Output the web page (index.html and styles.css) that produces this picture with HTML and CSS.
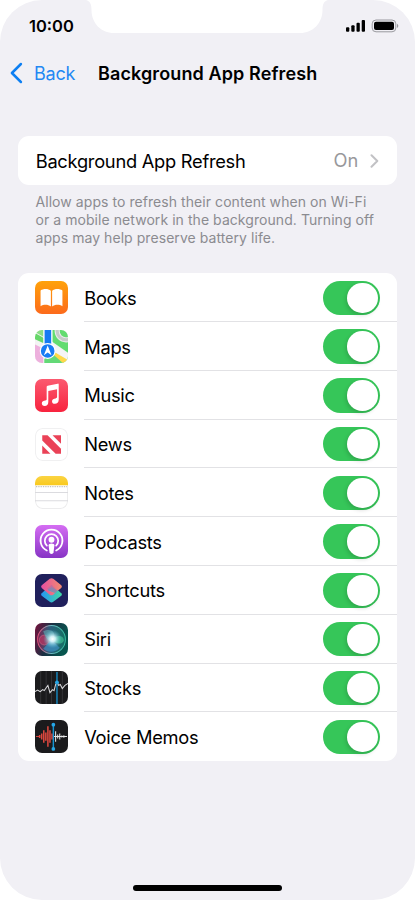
FILE: index.html
```
<!DOCTYPE html>
<html lang="en">
<head>
<meta charset="utf-8">
<title>Background App Refresh</title>
<link rel="stylesheet" href="styles.css">
</head>
<body>
<main class="screen">
  <svg class="notch" viewBox="0 0 244 34"><path d="M0 0C4 1 5.500 4 5.500 10C5.500 23 15 33 28 33H214C227 33 236.500 23 236.500 10C236.500 4 238 1 242 0Z" fill="#fff"/></svg>
  <header class="status">
    <span class="time">10:00</span>
    <svg class="indicators" width="54" height="14" viewBox="0 0 54 14">
      <rect x="0" y="8.300" width="3.300" height="4.400" rx="1"/><rect x="5.300" y="6.300" width="3.300" height="6.400" rx="1"/><rect x="10.500" y="3.700" width="3.300" height="9" rx="1"/><rect x="15.700" y="1" width="3.300" height="11.700" rx="1"/>
      <rect x="26.200" y="1" width="23.600" height="11.800" rx="3.800" fill="none" stroke="#99999e"/><rect x="28" y="2.800" width="20" height="8.200" rx="2"/><path d="M51 4.800Q53.600 6.900 51 9Z" fill="#99999e"/>
    </svg>
  </header>
  <nav class="nav">
    <svg class="back-icon" width="14" height="22" viewBox="0 0 14 22"><path d="M11.900 2L2.900 11L11.900 20"/></svg>
    <a class="back">Back</a>
    <h1 class="title">Background App Refresh</h1>
  </nav>
  <section class="card setting">
    <span class="setting-label">Background App Refresh</span>
    <span class="setting-value">On</span>
    <svg class="chevron" width="9" height="14" viewBox="0 0 9 14"><path d="M1.500 1.200L7.300 7L1.500 12.800"/></svg>
  </section>
  <p class="note">Allow apps to refresh their content when on Wi-Fi<br>or a mobile network in the background. Turning off<br>apps may help preserve battery life.</p>
  <ul class="card list">
    <li class="row">
      <svg class="icon" viewBox="0 0 32 32"><defs><linearGradient id="books" x2="0" y2="1"><stop stop-color="#ffa20a"/><stop offset="1" stop-color="#fc6a1c"/></linearGradient></defs><rect width="32" height="32" fill="url(#books)"/><path d="M15.400 9.500C13 7.200 8 7.200 5.400 9.200V24.400C8.500 22.500 12.700 22.600 15.400 24.700ZM16.600 9.500C19 7.200 24 7.200 26.600 9.200V24.400C23.500 22.500 19.300 22.600 16.600 24.700Z" fill="#fff"/></svg>
      <div class="cell"><span>Books</span><i class="toggle"></i></div>
    </li>
    <li class="row">
      <svg class="icon" viewBox="0 0 32 32"><rect width="32" height="32" fill="#f3f3f3"/><path d="M0 3L9 8V13L0 9Z" fill="#66d769"/><path d="M0 0H9V7L0 2Z" fill="#8ade85"/><path d="M16 0H32V22L16 11Z" fill="#62dc70"/><path d="M0 14L8 18V32H0Z" fill="#edb0dd"/><path d="M9 28L19 17L32 26V32H9Z" fill="#63d977"/><path d="M16 13L32 23V32L13 17Z" fill="#f5f5f5"/><path d="M20 22L32 29V32H27L18 24Z" fill="#ffd84a"/><circle cx="30" cy="1" r="8.500" fill="none" stroke="#e9e9eb" stroke-width="5"/><circle cx="30" cy="1" r="8.500" fill="none" stroke="#c5cbc8" stroke-width="3"/><path d="M8 0H17V18H8Z" fill="#fff"/><path d="M9.300 0H15.700V17H9.300Z" fill="#147bf2"/><circle cx="12.300" cy="20.300" r="7.700" fill="#fff"/><circle cx="12.300" cy="20.300" r="6.600" fill="#187cf4"/><path d="M12.300 15L16 24.500L12.300 21.700L8.600 24.500Z" fill="#fff"/></svg>
      <div class="cell"><span>Maps</span><i class="toggle"></i></div>
    </li>
    <li class="row">
      <svg class="icon" viewBox="0 0 32 32"><defs><linearGradient id="music" x2="0" y2="1"><stop stop-color="#fb5a70"/><stop offset="1" stop-color="#f8233e"/></linearGradient></defs><rect width="32" height="32" fill="url(#music)"/><path d="M11.300 7.600Q11.300 6.700 12.200 6.500L22 4.500Q23 4.300 23 5.300V20.200C23 22.700 21.400 24 19.300 24.100C17.500 24.100 16.400 23 16.500 21.500C16.600 19.700 18.200 19.100 20 18.800C21 18.600 21.400 18.300 21.400 17.300V10L12.900 11.700V22.300C12.900 24.800 11.500 26 9.400 26.100C7.600 26.100 6.500 25 6.600 23.500C6.700 21.700 8.300 21.100 10.100 20.800C11.100 20.600 11.300 20.300 11.300 19.300Z" fill="#fff"/></svg>
      <div class="cell"><span>Music</span><i class="toggle"></i></div>
    </li>
    <li class="row">
      <svg class="icon" viewBox="0 0 32 32"><rect x=".5" y=".5" width="31" height="31" rx="7" fill="#fff" stroke="#f0f0f1"/><g fill="#ea4257"><path d="M7 7H12.200L25.200 20V25H20L7 12Z"/><path d="M17 7H25.200V15.200Z"/><path d="M7 17L15 25H7Z"/></g></svg>
      <div class="cell"><span>News</span><i class="toggle"></i></div>
    </li>
    <li class="row">
      <svg class="icon" viewBox="0 0 32 32"><defs><linearGradient id="notes" x2="0" y2="1"><stop stop-color="#fbd443"/><stop offset="1" stop-color="#f9c91d"/></linearGradient></defs><rect x=".5" y=".5" width="31" height="31" rx="7" fill="#fff" stroke="#ececed"/><path d="M0 0H32V9H0Z" fill="url(#notes)"/><path d="M1 10.300H31" stroke="#b9b7ae" stroke-dasharray=".8 .9"/><path d="M0 16H32M0 24H32" stroke="#d8d8dc" stroke-width=".9"/></svg>
      <div class="cell"><span>Notes</span><i class="toggle"></i></div>
    </li>
    <li class="row">
      <svg class="icon" viewBox="0 0 32 32"><defs><linearGradient id="pods" x2="0" y2="1"><stop stop-color="#d56df3"/><stop offset="1" stop-color="#8734c5"/></linearGradient></defs><rect width="32" height="32" fill="url(#pods)"/><g fill="none" stroke="#fff" stroke-width="1.700" stroke-linecap="round"><path d="M11.500 24.700A10.600 10.600 0 1 1 20.500 24.700"/><path d="M11.500 20A6.500 6.500 0 1 1 20.500 20"/></g><circle cx="16" cy="14.300" r="2.800" fill="#fff"/><path d="M13.200 19.700Q13.200 18 16 18T18.800 19.700L18 26.500Q17.700 28 16 28T14 26.500Z" fill="#fff"/></svg>
      <div class="cell"><span>Podcasts</span><i class="toggle"></i></div>
    </li>
    <li class="row">
      <svg class="icon" viewBox="0 0 32 32"><defs><linearGradient id="sa" x1="0" x2="1"><stop stop-color="#e64fa0"/><stop offset="1" stop-color="#f18b70"/></linearGradient><linearGradient id="sb" x1="0" x2="1"><stop stop-color="#2795f3"/><stop offset="1" stop-color="#43d9a4"/></linearGradient></defs><rect width="32" height="32" fill="#20205c"/><path d="M14.300 11.700Q16 10.300 17.700 11.700L25.500 18.700Q26.700 20 25.500 21.200L17.700 27Q16 28.200 14.300 27L6.500 21.200Q5.300 20 6.500 18.700Z" fill="url(#sb)"/><path d="M14.300 4.700Q16 3.400 17.700 4.700L25.500 11Q26.700 12.200 25.500 13.500L22 16.300L16 12.500L12.300 15.500L19.500 18.500L17.700 20Q16 21.200 14.300 20L6.500 13.500Q5.300 12.200 6.500 11Z" fill="url(#sa)"/><path d="M16 10.500L21.700 16.300L19.800 18.500L11.500 14.300Z" fill="#b66ca1" opacity=".7"/></svg>
      <div class="cell"><span>Shortcuts</span><i class="toggle"></i></div>
    </li>
    <li class="row">
      <svg class="icon" viewBox="0 0 32 32"><defs><linearGradient id="siri" x2="1" y2=".3"><stop stop-color="#77133e"/><stop offset=".5" stop-color="#193043"/><stop offset="1" stop-color="#07564f"/></linearGradient><linearGradient id="orb" x2="1"><stop stop-color="#7c2450"/><stop offset=".45" stop-color="#2a5f7c"/><stop offset="1" stop-color="#157263"/></linearGradient><linearGradient id="ring" x2="1"><stop stop-color="#df4b77"/><stop offset=".5" stop-color="#6bbac1"/><stop offset="1" stop-color="#31b59a"/></linearGradient><radialGradient id="glow"><stop stop-color="#fff"/><stop offset=".3" stop-color="#dffaff" stop-opacity=".9"/><stop offset="1" stop-color="#57c6d7" stop-opacity="0"/></radialGradient></defs><rect width="32" height="32" fill="url(#siri)"/><circle cx="16" cy="16" r="13.500" fill="url(#orb)" stroke="url(#ring)"/><circle cx="9" cy="16.500" r="4.800" fill="#c33561" opacity=".65" stroke="#ed6f8f" stroke-width=".8"/><path d="M8 8C16 4 22 10 17 17C12 19 10 13 8 8Z" fill="#5d9fab" opacity=".7"/><path d="M16 16C23 10 28 13 28 17C26 22 20 20 16 16Z" fill="#39b48d" opacity=".8"/><path d="M16 16L24 24C20 29 12 29 8 25Z" fill="#3e8ebe" opacity=".75"/><circle cx="17" cy="15.500" r="9" fill="url(#glow)"/></svg>
      <div class="cell"><span>Siri</span><i class="toggle"></i></div>
    </li>
    <li class="row">
      <svg class="icon" viewBox="0 0 32 32"><rect width="32" height="32" fill="#1b1b1d"/><path d="M5.500 0V32M10.800 0V32M16 0V32M26.500 0V32" stroke="#38383b" stroke-width=".8"/><path d="M21.300 1V32" stroke="#1686bd" stroke-width="1.400"/><path d="M0 20L2.500 18.500L5 20L7.500 18L9 19L11 16L12.500 14L14.500 21L17 18L18.500 19L20 13L21.500 11L23 14L24.500 13L26.500 17L29 14L32 12" fill="none" stroke="#d9d9dc" stroke-width="1"/><circle cx="21.300" cy="11" r="1.800" fill="#26a7e7"/></svg>
      <div class="cell"><span>Stocks</span><i class="toggle"></i></div>
    </li>
    <li class="row">
      <svg class="icon" viewBox="0 0 32 32"><rect width="32" height="32" fill="#1b1b1d"/><path d="M1 16H4" stroke="#d8453d"/><path d="M4.500 14.500V17.500M6.500 13V19M8.500 10V22M10.500 12V20M12.500 6V26M14.500 10V22M16.500 13V19" stroke="#dc473e" stroke-width="1.500"/><path d="M20 11V21M22 14V18M24 13V19M26 15V17M28 14.800V17.200M18 16H31" stroke="#e8e8e8" stroke-width="1"/><path d="M17.800 5V28" stroke="#1693d2" stroke-width="1.400"/><circle cx="17.800" cy="4.500" r="1.800" fill="#26a7e7"/><circle cx="17.800" cy="28" r="1.800" fill="#26a7e7"/></svg>
      <div class="cell"><span>Voice Memos</span><i class="toggle"></i></div>
    </li>
  </ul>
  <div class="home"></div>
</main>
</body>
</html>
```
FILE: styles.css
```
* { box-sizing: border-box; }
body { margin: 0; background: #fff; font-family: Inter, "Liberation Sans", sans-serif; color: #000; }
.screen { position: relative; width: 415px; height: 900px; background: #f1f0f5; border-radius: 42px; overflow: hidden; display: flex; flex-direction: column; }
.notch { position: absolute; left: 86px; top: 0; width: 244px; height: 34px; }
.status { height: 50px; flex: none; display: flex; justify-content: space-between; align-items: center; padding: 1px 15px 0 29px; }
.time { font-size: 16.500px; font-weight: 600; letter-spacing: 0; }
.indicators { display: block; }
.nav { height: 46px; flex: none; display: flex; align-items: center; padding-left: 9px; font-size: 18px; }
.back-icon { fill: none; stroke: #0d7ff2; stroke-width: 2.500; stroke-linecap: round; stroke-linejoin: round; }
.back { width: 64px; margin-left: 11px; color: #2388f3; letter-spacing: -.2px; }
.title { margin: 0; font-size: 18px; font-weight: 600; letter-spacing: .11px; white-space: nowrap; }
.card { width: 379.500px; margin-left: 17.700px; background: #fff; border-radius: 11px; flex: none; }
.setting { margin-top: 40px; height: 49px; padding: 1px 18px 0; display: flex; align-items: center; font-size: 18.300px; letter-spacing: -.27px; }
.setting-value { margin: 0 0 2px auto; color: #98989b; letter-spacing: 0; }
.chevron { margin-left: 12px; fill: none; stroke: #c2c2c5; stroke-width: 2; stroke-linecap: round; stroke-linejoin: round; }
.note { margin: 8px 0 0 35.500px; font-size: 14px; line-height: 18px; letter-spacing: .06px; color: #8b8b90; height: 54px; white-space: nowrap; flex: none; }
.list { margin-top: 26.400px; margin-bottom: 0; padding: 0; height: 487.800px; list-style: none; }
.row { height: 48.780px; padding-left: 17px; display: flex; align-items: center; }
.icon { width: 33px; height: 33px; border-radius: 7px; flex: none; overflow: hidden; }
.cell { flex: 1; height: 100%; margin-left: 16.500px; padding: 1px 17.500px 0 0; display: flex; justify-content: space-between; align-items: center; border-bottom: 1px solid #e2e2e5; font-size: 18.300px; letter-spacing: -.27px; }
.row:last-child .cell { border-bottom: 0; }
.toggle { width: 57px; height: 34.500px; padding: 2px; border-radius: 18px; background: #36c659; display: flex; justify-content: flex-end; }
.toggle::after { content: ""; width: 30.500px; height: 30.500px; border-radius: 50%; background: #fff; box-shadow: -1px 2px 4px rgba(0, 0, 0, .16); }
.home { width: 149px; height: 6px; margin: auto 0 9px 133px; border-radius: 3px; background: #000; flex: none; }
```
